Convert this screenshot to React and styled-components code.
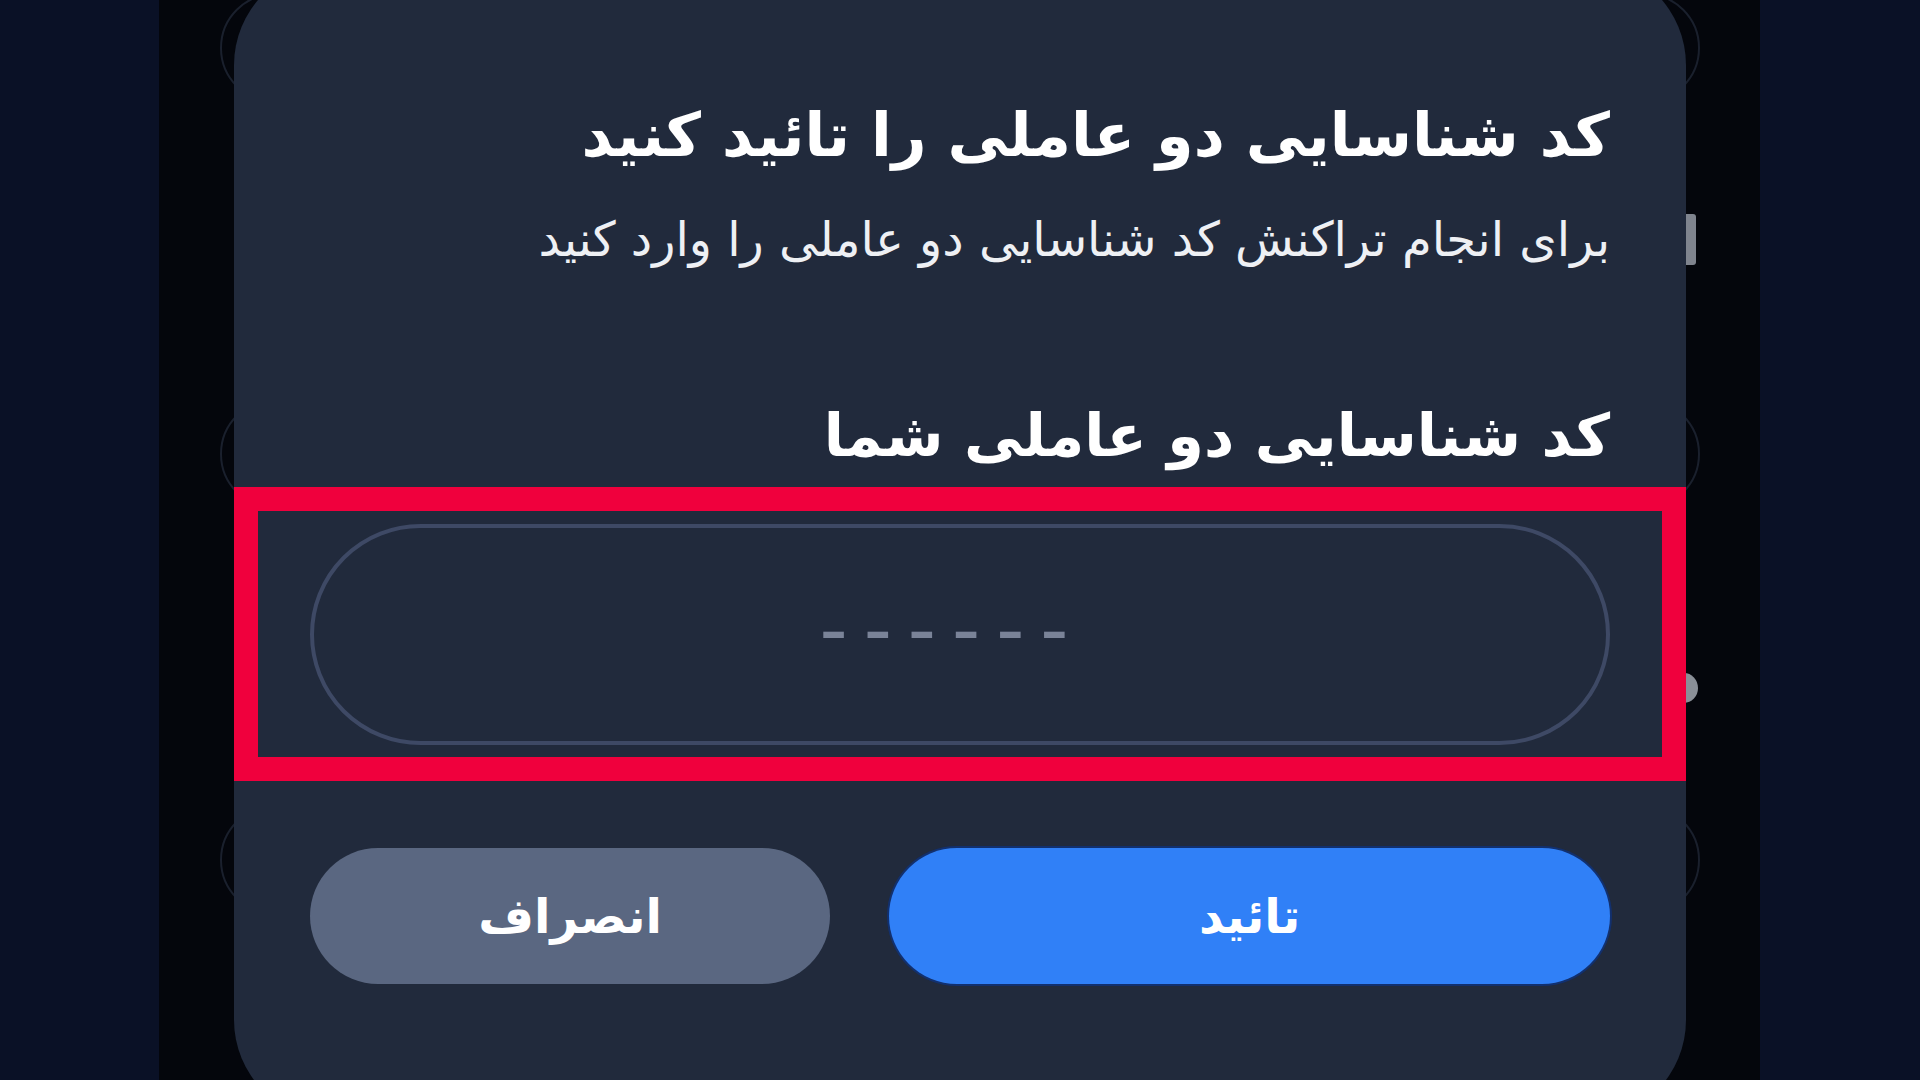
import React from 'react';
import styled, { createGlobalStyle } from 'styled-components';

const GlobalStyle = createGlobalStyle`
  html, body {
    margin: 0;
    padding: 0;
    background: #0b1227;
  }
  body {
    width: 1920px;
    height: 1080px;
    overflow: hidden;
    font-family: "DejaVu Sans", sans-serif;
  }
  * {
    box-sizing: border-box;
  }
`;

// page frame: navy margins around the dimmed phone screen
const Screen = styled.div`
  width: 1920px;
  height: 1080px;
  overflow: hidden;
  display: grid;
  grid-template-columns: 159px 1fr 160px;
  background: #0b1227;
`;

const SideFill = styled.div`
  background: #0a1126;
`;

const PhoneArea = styled.div`
  position: relative;
  display: grid;
  background: #04060c;
  overflow: hidden;

  & > * {
    grid-area: 1 / 1;
  }
`;

// faint outlines of the list that sits behind the sheet
const BackdropList = styled.div`
  display: flex;
  flex-direction: column;
  gap: 296px;
  margin-top: -7px;
  padding: 0 60px 0 61px;
`;

const BackdropItem = styled.div`
  height: 110px;
  border: 2px solid #1a202d;
  border-radius: 60px;
`;

const ScrollThumb = styled.div`
  position: absolute;
  right: 64px;
  top: 214px;
  width: 14px;
  height: 51px;
  border-radius: 3px;
  background: #7f848e;
`;

const ScrollKnob = styled.div`
  position: absolute;
  right: 62px;
  top: 673px;
  width: 28px;
  height: 30px;
  border-radius: 50%;
  background: #8a8f98;
`;

const SheetLayer = styled.div`
  position: relative;
  z-index: 1;
  padding: 0 74px 0 75px;
`;

const Sheet = styled.section`
  direction: rtl;
  margin-top: -35px;
  height: 1155px;
  background: #212a3c;
  border-radius: 100px;
  padding: 126px 76px 0;
  display: flex;
  flex-direction: column;
  color: #ffffff;
`;

const Title = styled.h2`
  margin: 0;
  font-size: 60.5px;
  line-height: 88px;
  font-weight: 700;
  color: #ffffff;
`;

const Subtitle = styled.p`
  margin: 27px 0 0;
  font-size: 48px;
  line-height: 66px;
  font-weight: 400;
  color: #eef0f4;
`;

const FieldLabel = styled.label`
  display: block;
  margin-top: 120px;
  font-size: 59px;
  line-height: 88px;
  font-weight: 700;
  color: #ffffff;
`;

const Highlight = styled.div`
  margin: 7px -76px 0;
  border: 24px solid #f0003d;
  padding: 13px 52px 12px;
`;

const CodeField = styled.div`
  height: 221px;
  border: 4px solid #3e4965;
  border-radius: 111px;
  display: flex;
  align-items: center;
`;

const CodeInput = styled.input`
  direction: ltr;
  width: 100%;
  height: 100%;
  padding: 0 16px 12px 0;
  border: none;
  outline: none;
  background: transparent;
  text-align: center;
  font-family: "DejaVu Sans", sans-serif;
  font-size: 78px;
  letter-spacing: 16px;
  color: #ffffff;

  &::placeholder {
    color: #7a8398;
  }
`;

const Actions = styled.div`
  margin-top: 67px;
  display: grid;
  grid-template-columns: 722fr 521fr;
  gap: 59px;
`;

const ActionButton = styled.button`
  height: 136px;
  border: none;
  border-radius: 68px;
  font-family: "DejaVu Sans", sans-serif;
  font-size: 48px;
  font-weight: 700;
  color: #ffffff;
  background: ${(p) => (p.$primary ? '#3080f7' : '#5a6781')};
  box-shadow: ${(p) => (p.$primary ? '0 0 0 2px #12306e' : 'none')};
  cursor: pointer;
`;

export default function App() {
  return (
    <>
      <GlobalStyle />
      <Screen>
        <SideFill />
        <PhoneArea>
          <BackdropList>
            <BackdropItem />
            <BackdropItem />
            <BackdropItem />
          </BackdropList>
          <ScrollThumb />
          <ScrollKnob />
          <SheetLayer>
            <Sheet>
              <Title>کد شناسایی دو عاملی را تائید کنید</Title>
              <Subtitle>برای انجام تراکنش کد شناسایی دو عاملی را وارد کنید</Subtitle>
              <FieldLabel htmlFor="otp">کد شناسایی دو عاملی شما</FieldLabel>
              <Highlight>
                <CodeField>
                  <CodeInput id="otp" placeholder="------" inputMode="numeric" />
                </CodeField>
              </Highlight>
              <Actions>
                <ActionButton $primary>تائید</ActionButton>
                <ActionButton>انصراف</ActionButton>
              </Actions>
            </Sheet>
          </SheetLayer>
        </PhoneArea>
        <SideFill />
      </Screen>
    </>
  );
}
